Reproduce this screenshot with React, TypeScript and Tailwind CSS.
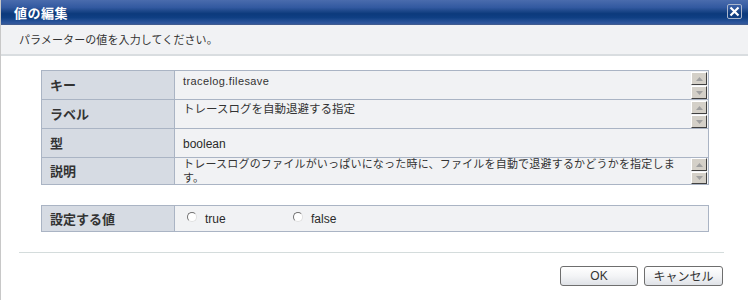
import React from "react";

const JP = { fontFamily: '"Noto Sans CJK JP", "Noto Sans", sans-serif' };
const LAT = { fontFamily: '"Liberation Sans", Arial, sans-serif' };

function ScrollBtn({ up, h = "h-[13px]" }: { up: boolean; h?: string }) {
  return (
    <div className={`w-[16px] ${h} bg-[#d4d0c8] border-t border-l border-t-white border-l-white border-r border-b border-r-[#404040] border-b-[#404040] flex items-center justify-center`}>
      <svg width="7" height="4" viewBox="0 0 7 4">
        {up ? (
          <polygon points="0,4 7,4 3.5,0" fill="#a0a0a0" />
        ) : (
          <polygon points="0,0 7,0 3.5,4" fill="#a0a0a0" />
        )}
      </svg>
    </div>
  );
}

function Scroll({ small }: { small?: boolean }) {
  return (
    <div className="flex flex-col gap-[1px] self-end mr-[1px] shrink-0">
      <ScrollBtn up />
      <ScrollBtn up={false} h={small ? "h-[12px]" : "h-[13px]"} />
    </div>
  );
}

function Label({ children }: { children: React.ReactNode }) {
  return (
    <div
      className="w-[133px] shrink-0 bg-[#d6dbe3] border-r border-[#aab4c4] flex items-center pl-[8px] text-[13px] font-bold text-[#333]"
      style={JP}
    >
      {children}
    </div>
  );
}

function Radio({ label }: { label: string }) {
  return (
    <div className="flex items-center">
      <div className="w-[10px] h-[10px] rounded-full bg-white border border-t-[#707070] border-l-[#707070] border-r-[#e0e0e0] border-b-[#e0e0e0] mt-[-3px]" />
      <span className="ml-[8px] text-[12px] text-[#2a2a2a]" style={LAT}>
        {label}
      </span>
    </div>
  );
}

export default function App() {
  return (
    <div className="w-[748px] h-[300px] bg-white border-l border-[#c8c8c8] overflow-hidden flex flex-col">
      {/* Title bar */}
      <div className="h-[25px] shrink-0 flex items-center justify-between pl-[13px] pr-[6px] bg-[linear-gradient(to_bottom,#4a6cad_0%,#3259a0_30%,#1b4688_45%,#0c3a7c_55%,#0f3f83_70%,#2c559b_90%,#34589a_96%,#4c5f86_100%)]">
        <span className="text-white font-bold text-[13px] tracking-[0.5px] leading-none" style={JP}>
          値の編集
        </span>
        <div className="w-[15px] h-[15px] border border-[#aab6cc] rounded-[2px] flex items-center justify-center mt-[-2px]">
          <svg width="11" height="11" viewBox="0 0 11 11">
            <path d="M1.5 1.5 L9.5 9.5 M9.5 1.5 L1.5 9.5" stroke="white" strokeWidth="2.2" />
          </svg>
        </div>
      </div>
      {/* Subtitle */}
      <div className="h-[31px] shrink-0 bg-[#f1f2f4] border-b-2 border-[#d9dde0] flex items-center pl-[18px]">
        <span className="text-[11px] text-[#333] tracking-[0.1px]" style={JP}>
          パラメーターの値を入力してください。
        </span>
      </div>

      {/* Info table */}
      <div className="mt-[14px] ml-[40px] w-[668px] border border-[#aab4c4] flex flex-col">
        <div className="h-[29px] flex border-b border-[#aab4c4]">
          <Label>キー</Label>
          <div className="flex-1 bg-[#f1f2f4] flex justify-between pl-[8px]">
            <span className="text-[11px] text-[#333] pt-[2px] tracking-[0.4px]" style={LAT}>
              tracelog.filesave
            </span>
            <Scroll />
          </div>
        </div>
        <div className="h-[29px] flex border-b border-[#aab4c4]">
          <Label>ラベル</Label>
          <div className="flex-1 bg-[#f1f2f4] flex justify-between pl-[8px]">
            <span className="text-[11.5px] text-[#333] pt-[1px] leading-[15px]" style={JP}>
              トレースログを自動退避する指定
            </span>
            <Scroll />
          </div>
        </div>
        <div className="h-[29px] flex border-b border-[#aab4c4]">
          <Label>型</Label>
          <div className="flex-1 bg-[#f1f2f4] flex items-center pl-[8px]">
            <span className="text-[12px] text-[#2a2a2a] pt-[1px]" style={LAT}>
              boolean
            </span>
          </div>
        </div>
        <div className="h-[26px] flex">
          <Label>説明</Label>
          <div className="flex-1 bg-[#f1f2f4] flex justify-between pl-[8px]">
            <div className="flex flex-col text-[11px] text-[#333] leading-[14px] mt-[-2px] tracking-[0.2px] whitespace-nowrap" style={JP}>
              <span>トレースログのファイルがいっぱいになった時に、ファイルを自動で退避するかどうかを指定しま</span>
              <span>す。</span>
            </div>
            <Scroll small />
          </div>
        </div>
      </div>

      {/* Value to set */}
      <div className="mt-[20px] ml-[40px] w-[668px] h-[27px] border border-[#aab4c4] flex">
        <Label>設定する値</Label>
        <div className="flex-1 bg-[#f1f2f4] flex items-center pl-[12px]">
          <div className="w-[106px]">
            <Radio label="true" />
          </div>
          <Radio label="false" />
        </div>
      </div>

      {/* Separator */}
      <div className="mt-[20px] ml-[18px] w-[705px] h-[1px] bg-[#d4dcdc]" />

      {/* Buttons */}
      <div className="mt-[13px] flex justify-end gap-[6px] pr-[25px]">
        <button
          className="w-[78px] h-[20px] rounded-[3px] border border-[#6e6e6e] bg-[linear-gradient(to_bottom,#ffffff_0%,#f3f4f6_50%,#dfe2e7_100%)] text-[12px] text-[#333] flex items-center justify-center"
          style={LAT}
        >
          OK
        </button>
        <button
          className="w-[79px] h-[20px] rounded-[3px] border border-[#6e6e6e] bg-[linear-gradient(to_bottom,#ffffff_0%,#f3f4f6_50%,#dfe2e7_100%)] text-[12px] text-[#333] flex items-center justify-center"
          style={JP}
        >
          キャンセル
        </button>
      </div>
    </div>
  );
}
